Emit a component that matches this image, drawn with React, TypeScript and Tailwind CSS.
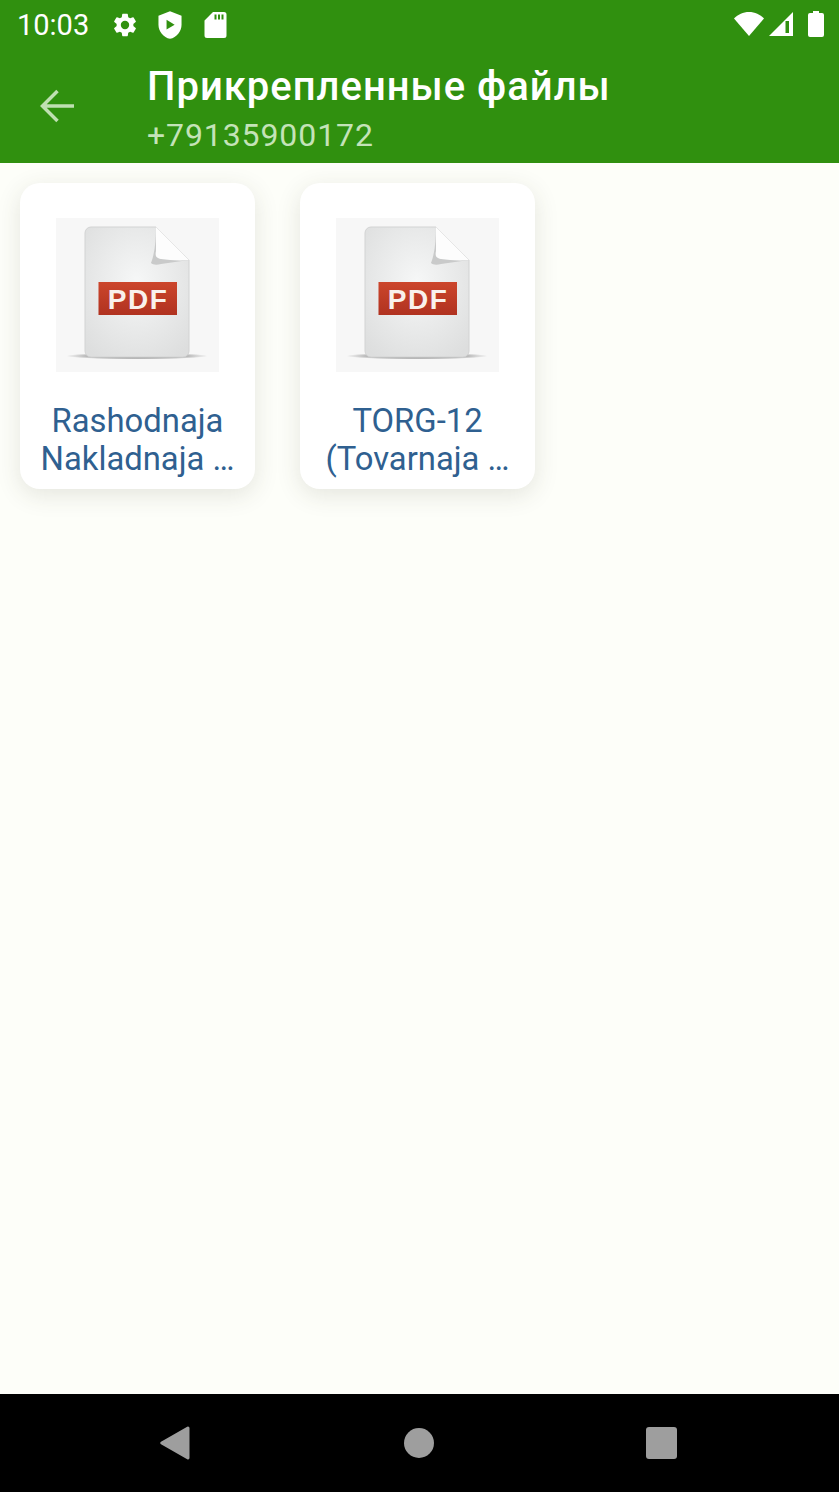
const files = [
  { id: "rashodnaja", lines: ["Rashodnaja", "Nakladnaja …"] },
  { id: "torg", lines: ["TORG-12", "(Tovarnaja …"] },
];

function PdfIcon({ id }: { id: string }) {
  return (
    <svg width="163" height="154" viewBox="0 0 163 154" className="block">
      <defs>
        <radialGradient id={`page-${id}`} cx="50%" cy="42%" r="70%">
          <stop offset="0%" stopColor="#f6f7f7" />
          <stop offset="100%" stopColor="#dddede" />
        </radialGradient>
        <linearGradient id={`label-${id}`} x1="0" y1="0" x2="0" y2="1">
          <stop offset="0%" stopColor="#cc462c" />
          <stop offset="100%" stopColor="#b03220" />
        </linearGradient>
        <radialGradient id={`shadow-${id}`}>
          <stop offset="0%" stopColor="#8a8a8a" />
          <stop offset="70%" stopColor="#b4b4b4" />
          <stop offset="100%" stopColor="#f7f7f7" />
        </radialGradient>
      </defs>
      <rect width="163" height="154" fill="#f7f7f7" />
      <ellipse cx="81" cy="138" rx="71" ry="3.500" fill={`url(#shadow-${id})`} />
      <path
        d="M35 9h65l33 33v91a6 6 0 0 1-6 6H35a6 6 0 0 1-6-6V15a6 6 0 0 1 6-6z"
        fill={`url(#page-${id})`}
        stroke="#d2d3d3"
        strokeWidth="1"
      />
      <path d="M100 9c0 12-1 26-5 36 2 2 6 2 10 1l28-4z" fill="#c9caca" />
      <path d="M100 9l33 33c-10 1-20 0-28-1-5-1-6-3-5-8z" fill="#fdfdfd" />
      <rect x="42.500" y="64" width="78.500" height="33" fill={`url(#label-${id})`} />
      <text
        x="82"
        y="91"
        textAnchor="middle"
        fill="#f9f1ec"
        fontSize="28"
        fontWeight="700"
        letterSpacing="1.500"
        fontFamily="'Liberation Sans', sans-serif"
      >
        PDF
      </text>
    </svg>
  );
}

function FileCard({ id, lines }: { id: string; lines: string[] }) {
  return (
    <div className="flex h-[306px] w-[235px] flex-col items-center rounded-[20px] bg-white pt-[35px] shadow-[0_6px_24px_rgba(60,60,40,0.13)]">
      <PdfIcon id={id} />
      <div className="mt-[30px] text-center text-[32.8px] leading-[38px] text-[#2f6090]">
        {lines.map((line) => (
          <div key={line} className="whitespace-nowrap">
            {line}
          </div>
        ))}
      </div>
    </div>
  );
}

export default function App() {
  return (
    <div className="flex h-[1492px] w-[839px] flex-col overflow-hidden bg-[#fdfef9] font-['Roboto',sans-serif]">
      <div className="flex h-[163px] shrink-0 flex-col bg-[#30900f] text-white">
        <div className="flex h-[48px] shrink-0 items-center pl-[17px] pr-[15px] pt-[2px]">
          <span className="w-[71px] text-[29px] leading-none">10:03</span>
          <svg width="28" height="28" viewBox="0 0 24 24" fill="white" className="ml-[23px]">
            <path d="M19.140 12.940c.040-.300.060-.610.060-.940s-.020-.640-.070-.940l2.030-1.580a.5.5 0 0 0 .120-.620l-1.920-3.320a.5.5 0 0 0-.590-.220l-2.390.960a7 7 0 0 0-1.620-.940l-.360-2.540a.5.5 0 0 0-.480-.410h-3.840a.5.5 0 0 0-.470.410l-.360 2.540c-.590.240-1.130.570-1.620.940l-2.390-.960a.5.5 0 0 0-.590.220L2.740 8.860a.5.5 0 0 0 .120.620l2.030 1.580c-.050.300-.090.630-.090.940s.020.640.070.940l-2.030 1.580a.5.5 0 0 0-.120.620l1.920 3.320c.120.220.370.290.590.220l2.390-.960c.500.380 1.030.700 1.620.940l.360 2.540c.050.240.240.410.480.410h3.840c.240 0 .440-.170.470-.410l.360-2.540c.590-.240 1.130-.560 1.620-.940l2.390.960c.220.080.470 0 .590-.220l1.920-3.320a.5.5 0 0 0-.120-.620l-2.010-1.580zM12 15.600A3.600 3.600 0 1 1 12 8.400a3.600 3.600 0 0 1 0 7.200z" />
          </svg>
          <svg width="28" height="30" viewBox="0 0 24 26" className="ml-[17px]">
            <path d="M12 1 2 5v7.500C2 18.800 6.300 23.700 12 25c5.700-1.300 10-6.200 10-12.500V5z" fill="white" />
            <path d="M9 8.500v8.500l7-4.250z" fill="#30900f" />
          </svg>
          <svg width="24" height="28" viewBox="0 0 24 28" className="ml-[19px]">
            <path d="M10 1h11a2.500 2.500 0 0 1 2.500 2.500v21A2.500 2.500 0 0 1 21 27H4a2.500 2.500 0 0 1-2.500-2.500V9.500z" fill="white" />
            <path d="M11.500 3.500h2v5h-2zM15 3.500h2v5h-2zM18.500 3.500h2v5h-2z" fill="#30900f" />
          </svg>
          <div className="ml-auto -mt-[3px] flex items-center">
            <svg width="32" height="26" viewBox="0 0 32 26">
              <path d="M16 25 1 7.500C5 3.500 10 1 16 1s11 2.500 15 6.500z" fill="white" />
            </svg>
            <svg width="26" height="26" viewBox="0 0 26 26" className="ml-[3px]">
              <path d="M1 25 25 1v24z" fill="white" />
              <path d="M17.500 10h3.500v12h-3.500z" fill="#30900f" />
            </svg>
            <svg width="16" height="26" viewBox="0 0 16 26" className="ml-[14px]">
              <path d="M5 0h6v2h3a2 2 0 0 1 2 2v20a2 2 0 0 1-2 2H2a2 2 0 0 1-2-2V4a2 2 0 0 1 2-2h3z" fill="white" />
            </svg>
          </div>
        </div>
        <div className="flex flex-1 items-start">
          <svg width="36" height="34" viewBox="0 0 36 34" fill="none" className="ml-[40px] mt-[41px] shrink-0">
            <path d="M34 17H3M17.500 2 2.500 17l15 15" stroke="#bfe0b2" strokeWidth="3.500" />
          </svg>
          <div className="ml-[71px] pt-[15px]">
            <div className="whitespace-nowrap text-[40px] font-medium leading-[48px] tracking-[1px]">Прикрепленные файлы</div>
            <div className="mt-[5px] text-[32px] leading-[38px] tracking-[0.9px] text-[#c4e3b8]">+79135900172</div>
          </div>
        </div>
      </div>

      <div className="flex flex-1 items-start gap-[45px] px-[20px] pt-[20px]">
        {files.map((file) => (
          <FileCard key={file.id} id={file.id} lines={file.lines} />
        ))}
      </div>

      <div className="flex h-[98px] shrink-0 items-center bg-black">
        <svg width="32" height="36" viewBox="0 0 32 36" className="ml-[159px]">
          <path d="M29 1.500a1.500 1.500 0 0 1 1.500 1.500v30a1.500 1.500 0 0 1-2.300 1.200L2 19.300a1.500 1.500 0 0 1 0-2.600L28.200 1.700z" fill="#9e9e9e" />
        </svg>
        <div className="ml-[213px] h-[30px] w-[30px] rounded-full bg-[#9e9e9e]" />
        <div className="ml-[212px] h-[32px] w-[31px] rounded-[3px] bg-[#9e9e9e]" />
      </div>
    </div>
  );
}
